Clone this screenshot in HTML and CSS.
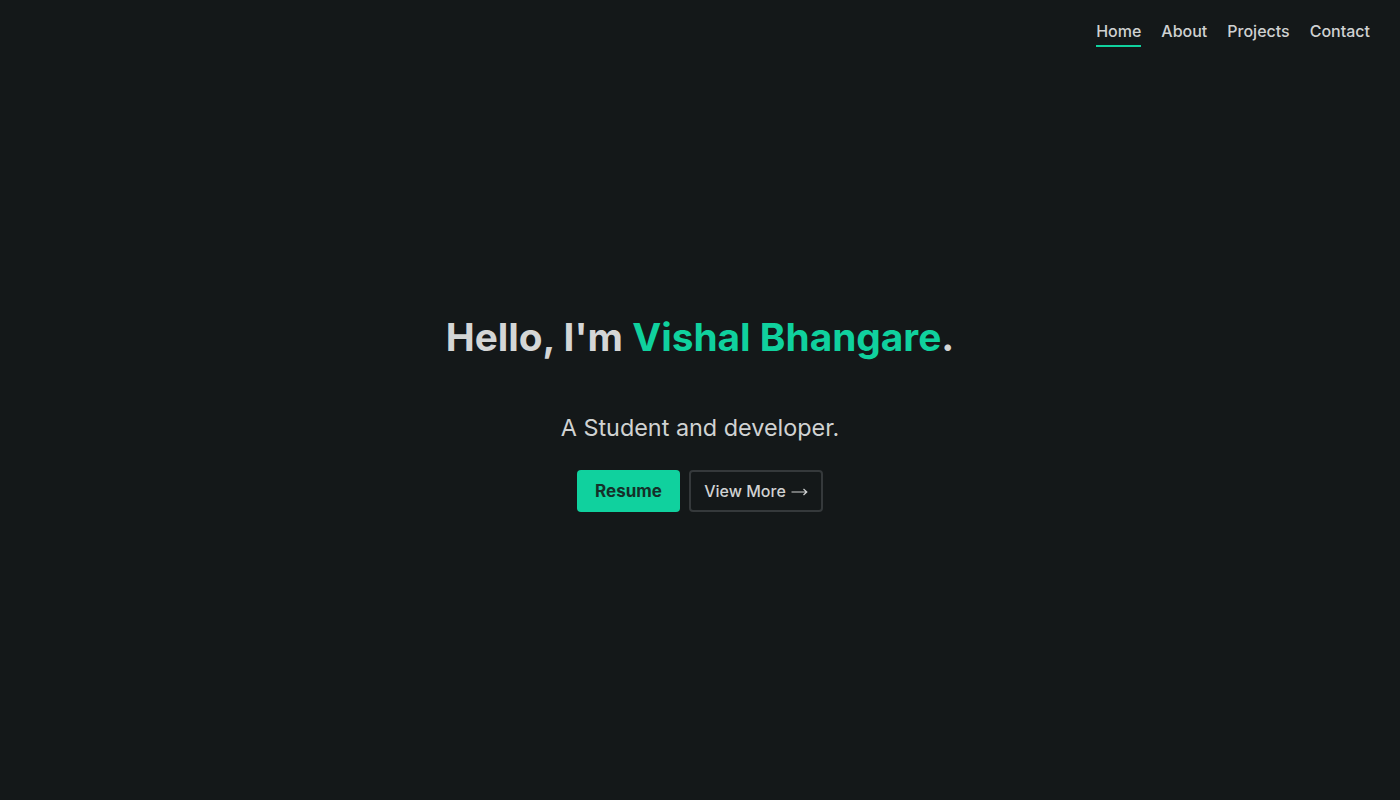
FILE: index.html
```html
<!DOCTYPE html>
<html lang="en">
<head>
<meta charset="utf-8">
<title>Vishal Bhangare</title>
<link rel="stylesheet" href="styles.css">
</head>
<body>
<header class="topbar">
  <nav class="nav">
    <a class="nav-link active" href="#">Home</a>
    <a class="nav-link" href="#">About</a>
    <a class="nav-link" href="#">Projects</a>
    <a class="nav-link" href="#">Contact</a>
  </nav>
</header>
<main class="hero">
  <h1 class="title">Hello, I'm <span class="accent">Vishal Bhangare</span>.</h1>
  <p class="subtitle">A Student and developer.</p>
  <div class="actions">
    <a class="btn btn-primary" href="#">Resume</a>
    <a class="btn btn-outline" href="#">View More <svg class="arrow" width="17" height="8" viewBox="0 0 17 8" aria-hidden="true"><path d="M0.5 4H15.5M12.5 1L15.8 4L12.5 7" fill="none" stroke="currentColor" stroke-width="1.2"/></svg></a>
  </div>
</main>
</body>
</html>
```
FILE: styles.css
```css
html, body {
  margin: 0;
  padding: 0;
  height: 100%;
}
body {
  background: #141819;
  color: #d2d4d4;
  font-family: Inter, "Noto Sans", sans-serif;
  display: flex;
  flex-direction: column;
}
.topbar {
  display: flex;
  justify-content: flex-end;
  padding: 20px 30px 0 0;
}
.nav {
  display: flex;
  gap: 20px;
}
.nav-link {
  color: #cfd1d1;
  text-decoration: none;
  font-size: 16px;
  font-weight: 500;
  line-height: 22px;
  padding-bottom: 3px;
  border-bottom: 2px solid transparent;
}
.nav-link.active {
  border-bottom-color: #10d19e;
}
.hero {
  flex: 1;
  display: flex;
  flex-direction: column;
  align-items: center;
  padding-top: 265px;
}
.title {
  margin: 0;
  font-size: 38.8px;
  font-weight: 700;
  color: #d4d6d6;
  line-height: 50px;
}
.accent {
  color: #10d19e;
}
.subtitle {
  margin: 51px 0 0;
  font-size: 23.4px;
  font-weight: 400;
  color: #d0d2d2;
  line-height: 30px;
}
.actions {
  display: flex;
  gap: 9px;
  margin-top: 27px;
}
.btn {
  display: flex;
  align-items: center;
  justify-content: center;
  gap: 5px;
  height: 42px;
  box-sizing: border-box;
  border-radius: 4px;
  font-size: 16px;
  text-decoration: none;
}
.btn-primary {
  width: 103px;
  background: #10d19e;
  color: #15302a;
  font-size: 17px;
  font-weight: 700;
}
.btn-outline {
  width: 134px;
  border: 2px solid #35393b;
  color: #d0d2d2;
  font-weight: 500;
}
.arrow {
  display: block;
  margin-top: 1px;
}
```
